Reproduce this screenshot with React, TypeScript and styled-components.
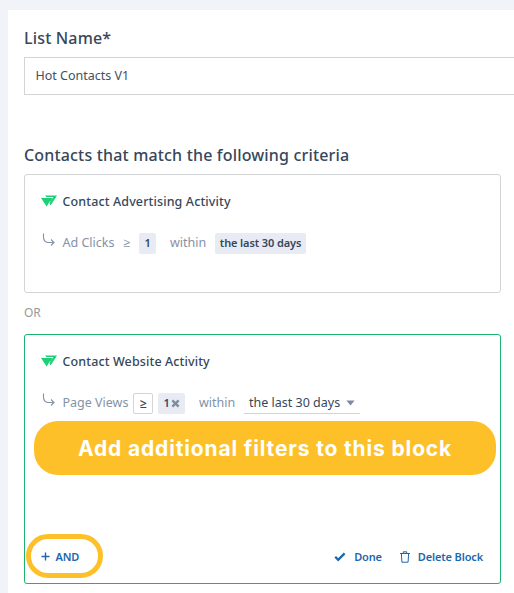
import React from "react";
import styled, { createGlobalStyle } from "styled-components";

const GlobalStyle = createGlobalStyle`
  * { box-sizing: border-box; }
  body {
    margin: 0;
    background: #f2f3f8;
    color: #36475a;
    font-family: "Noto Sans", "Open Sans", sans-serif;
    overflow: hidden;
  }
`;

const Page = styled.main`
  width: 514px;
  height: 593px;
  padding: 10px 0 0 8px;
  overflow: hidden;
`;

const Panel = styled.section`
  height: 583px;
  padding: 16px 0 0 16px;
  background: #fff;
`;

const Heading = styled.h2`
  margin: 0 0 7px;
  height: 24px;
  font-size: 16px;
  font-weight: 500;
  line-height: 24px;
  letter-spacing: 0.17px;
  white-space: nowrap;
`;

const NameInput = styled.input`
  display: block;
  width: 520px;
  height: 38px;
  margin: 0 0 48px;
  padding: 0 10.5px 1px;
  border: 1px solid #d3d4d6;
  border-radius: 0;
  outline: none;
  background: #fff;
  color: #435062;
  font: 400 12.5px "Noto Sans", sans-serif;
`;

const Block = styled.article<{ $active?: boolean }>`
  position: relative;
  display: flex;
  flex-direction: column;
  width: 477px;
  height: ${(p) => (p.$active ? 250 : 119)}px;
  padding: 16px;
  border: 1px solid ${(p) => (p.$active ? "#1bb36f" : "#d3d4d6")};
  border-radius: 3px;
`;

const BlockTitle = styled.h3`
  display: flex;
  align-items: center;
  gap: 5.5px;
  height: 20px;
  margin: 0 0 20px;
  font-size: 12.5px;
  font-weight: 500;
  letter-spacing: 0.12px;
  white-space: nowrap;
`;

const Rule = styled.div`
  display: flex;
  align-items: center;
  height: 24px;
  color: #8392a7;
  font-size: 12.5px;
  line-height: 20px;
  white-space: nowrap;
`;

const Cell = styled.span<{ $width: number; $gap?: number }>`
  flex: none;
  width: ${(p) => p.$width}px;
  margin-left: ${(p) => p.$gap ?? 0}px;
`;

const BranchCell = styled(Cell)`
  display: flex;
  align-self: flex-start;
  padding-top: 2px;
`;

const Chip = styled(Cell)`
  display: flex;
  align-items: center;
  justify-content: center;
  gap: 1px;
  height: 21px;
  border-radius: 2px;
  background: #e8ebf3;
  color: #36475a;
  font-size: 11px;
  font-weight: 600;
  letter-spacing: -0.12px;
`;

const Operator = styled(Cell)`
  display: flex;
  align-items: center;
  justify-content: center;
  height: 21px;
  padding-top: 2px;
  border: 1px solid #d3d4d6;
  border-radius: 2px;
  color: #36475a;
  font-weight: 600;
`;

const Select = styled(Cell)`
  display: flex;
  align-items: center;
  justify-content: space-between;
  height: 22px;
  padding: 0 5px;
  border-bottom: 1px solid #d3d4d6;
  color: #36475a;
`;

const Joiner = styled.div`
  height: 41px;
  color: #999;
  font-size: 12px;
  line-height: 39px;
`;

const Banner = styled.div`
  position: absolute;
  left: 9px;
  top: 86px;
  width: 462px;
  height: 54px;
  border-radius: 24px;
  background: #fec029;
  color: #fff;
  font: 700 21px/55px Inter, sans-serif;
  letter-spacing: 0.85px;
  text-align: center;
  white-space: nowrap;
`;

const Highlight = styled.div`
  position: absolute;
  left: 1px;
  top: 199px;
  width: 77px;
  height: 44px;
  border: 5px solid #fec029;
  border-radius: 22px;
  pointer-events: none;
`;

const Footer = styled.footer`
  display: flex;
  align-items: center;
  height: 20px;
  margin-top: auto;
  padding: 0 1px 1px 0;
`;

const Action = styled.button<{ $gap: number; $push?: boolean }>`
  display: flex;
  align-items: center;
  gap: ${(p) => p.$gap}px;
  margin: 0 ${(p) => (p.$push ? "auto" : "0")} 0 0;
  padding: 0;
  border: 0;
  background: none;
  color: #1d67ae;
  font: 600 11px "Noto Sans", sans-serif;
  letter-spacing: -0.15px;
  white-space: nowrap;

  & + & + & {
    margin-left: 18px;
  }
`;

const LogoIcon = () => (
  <svg width="16" height="12" viewBox="0 0 16 12" fill="#1dd077">
    <path d="M0 3h11L5.6 11.5z" />
    <path d="M4.2.4H16L9.7 10.3 8.4 8.4l3.9-6.3H5.2z" />
    <path d="M8.2 3.2h3.4L8.8 7.6z" />
  </svg>
);

const BranchIcon = () => (
  <svg width="16" height="16" viewBox="0 0 16 16" fill="none" stroke="#8392a7" strokeWidth="1.1">
    <path d="M2.5 .5v3.5Q2.5 9.5 8 9.5h5M10 6.5l3 3-3 3" />
  </svg>
);

const CloseIcon = () => (
  <svg width="9" height="9" viewBox="0 0 10 10" stroke="#7d8ca1" strokeWidth="2.6">
    <path d="m1.5 1.5 7 7m0-7-7 7" />
  </svg>
);

const CaretIcon = () => (
  <svg width="9" height="6" viewBox="0 0 9 6" fill="#7d8ca1">
    <path d="M.4.6h8.2L4.5 5.4z" />
  </svg>
);

const PlusIcon = () => (
  <svg width="9" height="9" viewBox="0 0 9 9" stroke="#1d67ae" strokeWidth="1.4">
    <path d="M4.5.5v8M.5 4.5h8" />
  </svg>
);

const CheckIcon = () => (
  <svg width="12" height="10" viewBox="0 0 12 10" fill="none" stroke="#1d67ae" strokeWidth="2.3">
    <path d="m1.2 4.8 3 3L10.6 1.4" />
  </svg>
);

const TrashIcon = () => (
  <svg width="10" height="12" viewBox="0 0 10 12" fill="none" stroke="#1d67ae" strokeWidth="1">
    <path d="M0 2.5h10M3.3 2.3V.8h3.4v1.5M1.4 2.7l.5 8.5h6.2l.5-8.5" />
  </svg>
);

export default function App() {
  return (
    <>
      <GlobalStyle />
      <Page>
        <Panel>
          <Heading>List Name*</Heading>
          <NameInput aria-label="List Name" defaultValue="Hot Contacts V1" />
          <Heading>Contacts that match the following criteria</Heading>
          <Block>
            <BlockTitle>
              <LogoIcon />
              Contact Advertising Activity
            </BlockTitle>
            <Rule>
              <BranchCell $width={21.5}><BranchIcon /></BranchCell>
              <Cell $width={51}>Ad Clicks</Cell>
              <Cell $width={8} $gap={9.5}>≥</Cell>
              <Chip $width={17} $gap={8}>1</Chip>
              <Cell $width={36} $gap={14}>within</Cell>
              <Chip $width={91} $gap={9}>the last 30 days</Chip>
            </Rule>
          </Block>
          <Joiner>OR</Joiner>
          <Block $active>
            <BlockTitle>
              <LogoIcon />
              Contact Website Activity
            </BlockTitle>
            <Rule>
              <BranchCell $width={21.5}><BranchIcon /></BranchCell>
              <Cell $width={65}>Page Views</Cell>
              <Operator $width={20} $gap={5.5}>≥</Operator>
              <Chip $width={27} $gap={5}>1<CloseIcon /></Chip>
              <Cell $width={36} $gap={14}>within</Cell>
              <Select $width={116} $gap={9}>the last 30 days<CaretIcon /></Select>
            </Rule>
            <Banner>Add additional filters to this block</Banner>
            <Footer>
              <Action $gap={5.5} $push><PlusIcon />AND</Action>
              <Action $gap={8}><CheckIcon />Done</Action>
              <Action $gap={8}><TrashIcon />Delete Block</Action>
            </Footer>
            <Highlight />
          </Block>
        </Panel>
      </Page>
    </>
  );
}
